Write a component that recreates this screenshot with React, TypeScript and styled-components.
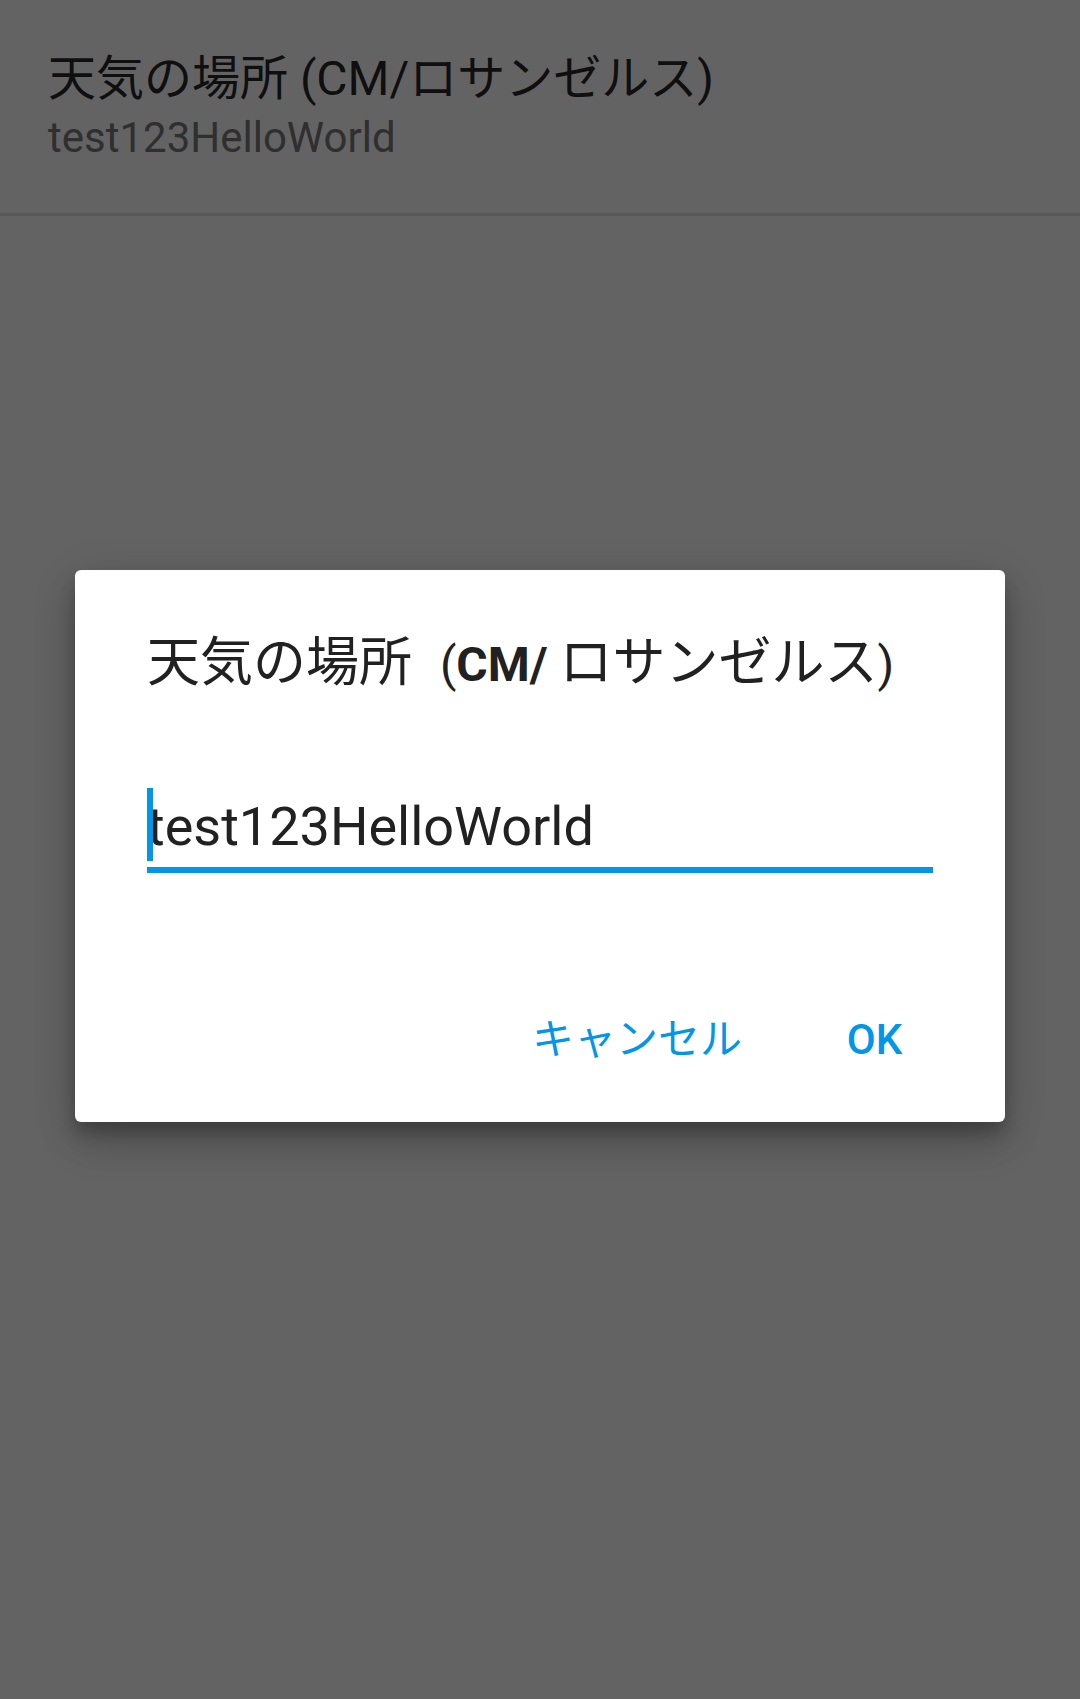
import styled, { createGlobalStyle } from 'styled-components';

const GlobalStyle = createGlobalStyle`
  html, body {
    margin: 0;
    padding: 0;
    background: #636363;
  }
  * {
    box-sizing: border-box;
  }
`;

const ACCENT = '#0395e7';

const Screen = styled.div`
  position: relative;
  width: 1080px;
  height: 1699px;
  background-color: #636363;
  overflow: hidden;
  font-family: Roboto, 'Noto Sans CJK JP', sans-serif;
`;

const Header = styled.header`
  padding: 50px 48px 45px;
  border-bottom: 3px solid #575757;
`;

const HeaderTitle = styled.div`
  font-size: 48px;
  line-height: 58px;
  color: #0f0f0f;
  white-space: nowrap;
`;

const HeaderSubtitle = styled.div`
  font-size: 42px;
  line-height: 60px;
  color: #2f2f2f;
`;

const Overlay = styled.div`
  position: absolute;
  inset: 0;
  display: flex;
  align-items: center;
  justify-content: center;
  padding-bottom: 7px;
`;

const Dialog = styled.div`
  width: 930px;
  background-color: #ffffff;
  border-radius: 6px;
  padding: 61px 72px 28px;
  box-shadow: 0 24px 38px rgba(0, 0, 0, 0.14), 0 9px 46px rgba(0, 0, 0, 0.12),
    0 11px 15px rgba(0, 0, 0, 0.2);
`;

const DialogTitle = styled.h2`
  margin: 0;
  font-size: 53px;
  font-weight: 400;
  line-height: 64px;
  color: #212121;
  white-space: nowrap;
`;

// latin runs of the title are set a bit smaller than the CJK ones, like on the device
const Latin = styled.span<{ $bold?: boolean; $before?: number; $after?: number }>`
  font-size: 48px;
  font-weight: ${({ $bold }) => ($bold ? 700 : 400)};
  margin-left: ${({ $before }) => $before ?? 0}px;
  margin-right: ${({ $after }) => $after ?? 0}px;
`;

const Field = styled.div`
  position: relative;
  margin-top: 93px;
  font-size: 54px;
  line-height: 73px;
  color: #212121;
  padding-bottom: 4px;
  border-bottom: 6px solid ${ACCENT};
`;

const Caret = styled.span`
  position: absolute;
  left: 0;
  top: -2px;
  width: 6px;
  height: 73px;
  background-color: ${ACCENT};
`;

const ButtonRow = styled.div`
  display: flex;
  justify-content: flex-end;
  gap: 2px;
  margin: 113px -48px 0 0;
`;

const TextButton = styled.button<{ $minWidth?: number; $weight?: number }>`
  height: 108px;
  min-width: ${({ $minWidth }) => $minWidth ?? 0}px;
  padding: 0 24px;
  border: 0;
  background: transparent;
  font-family: Roboto, 'Noto Sans CJK JP', sans-serif;
  font-size: 42px;
  font-weight: ${({ $weight }) => $weight ?? 500};
  line-height: 108px;
  color: ${ACCENT};
  text-align: center;
  cursor: pointer;
`;

const App = () => {
  return (
    <Screen>
      <GlobalStyle />
      <Header>
        <HeaderTitle>天気の場所 (CM/ロサンゼルス)</HeaderTitle>
        <HeaderSubtitle>test123HelloWorld</HeaderSubtitle>
      </Header>

      <Overlay>
        <Dialog>
          <DialogTitle>
            天気の場所<Latin $before={16}> (</Latin>
            <Latin $bold $after={12}>
              CM/
            </Latin>
            ロサンゼルス<Latin>)</Latin>
          </DialogTitle>
          <Field>
            <Caret />
            test123HelloWorld
          </Field>
          <ButtonRow>
            <TextButton $weight={400}>キャンセル</TextButton>
            <TextButton $minWidth={213}>OK</TextButton>
          </ButtonRow>
        </Dialog>
      </Overlay>
    </Screen>
  );
};

export default App;
